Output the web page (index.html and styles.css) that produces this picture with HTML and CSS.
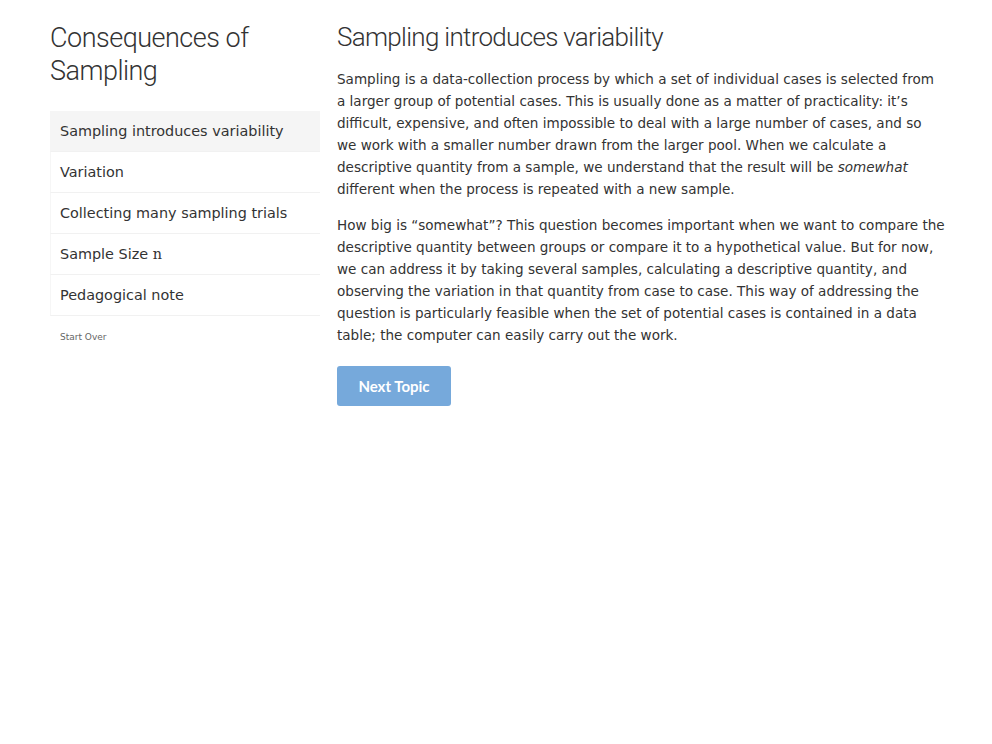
FILE: index.html
```html
<!DOCTYPE html>
<html>
<head>
<meta charset="utf-8">
<link rel="stylesheet" href="styles.css">
</head>
<body>
<div class="page">
  <aside class="sidebar">
    <h1 class="title">Consequences of Sampling</h1>
    <ul class="toc">
      <li class="item active">Sampling introduces variability</li>
      <li class="item">Variation</li>
      <li class="item">Collecting many sampling trials</li>
      <li class="item">Sample Size <span class="serif">n</span></li>
      <li class="item">Pedagogical note</li>
    </ul>
    <div class="start-over">Start Over</div>
  </aside>
  <main class="content">
    <h2 class="heading">Sampling introduces variability</h2>
    <p>Sampling is a data-collection process by which a set of individual cases is selected from a larger group of potential cases. This is usually done as a matter of practicality: it’s difficult, expensive, and often impossible to deal with a large number of cases, and so we work with a smaller number drawn from the larger pool. When we calculate a descriptive quantity from a sample, we understand that the result will be <em>somewhat</em> different when the process is repeated with a new sample.</p>
    <p>How big is “somewhat”? This question becomes important when we want to compare the descriptive quantity between groups or compare it to a hypothetical value. But for now, we can address it by taking several samples, calculating a descriptive quantity, and observing the variation in that quantity from case to case. This way of addressing the question is particularly feasible when the set of potential cases is contained in a data table; the computer can easily carry out the work.</p>
    <button class="btn">Next Topic</button>
  </main>
</div>
</body>
</html>
```
FILE: styles.css
```css
html, body {
  margin: 0;
  padding: 0;
  background: #fff;
}
body {
  font-family: "DejaVu Sans", Verdana, sans-serif;
  color: #333;
}
.page {
  display: flex;
  padding: 0 0 0 50px;
}
.sidebar {
  width: 270px;
  flex: none;
}
.title {
  font-family: Roboto, "Liberation Sans", sans-serif;
  font-weight: 300;
  font-size: 27px;
  line-height: 33px;
  color: #333;
  margin: 22px 0 23px 0;
  letter-spacing: -0.5px;
}
.toc {
  list-style: none;
  margin: 0;
  padding: 0;
}
.item {
  font-size: 14.4px;
  height: 40px;
  line-height: 40px;
  padding: 0 10px 0 9px;
  border-bottom: 1px solid #f1f1f1;
  border-left: 1px solid #f6f6f6;
  color: #333;
}
.item.active {
  background: #f5f5f5;
  border-left-color: #f5f5f5;
}
.serif {
  font-family: "DejaVu Serif", serif;
}
.start-over {
  font-size: 9px;
  color: #666;
  padding: 16px 0 0 10px;
}
.content {
  margin-left: 17px;
  width: 608px;
}
.heading {
  font-family: Roboto, "Liberation Sans", sans-serif;
  font-weight: 300;
  font-size: 26px;
  line-height: 33px;
  color: #333;
  margin: 21px 0 14px 0;
  letter-spacing: -0.7px;
}
p {
  font-size: 13.55px;
  line-height: 22px;
  margin: 0 0 14px 0;
}
.btn {
  font-family: Lato, "DejaVu Sans", sans-serif;
  font-size: 15px;
  font-weight: 700;
  color: #fff;
  background: #76a9db;
  border: none;
  border-radius: 3px;
  width: 114px;
  height: 40px;
  margin-top: 6px;
}
```
